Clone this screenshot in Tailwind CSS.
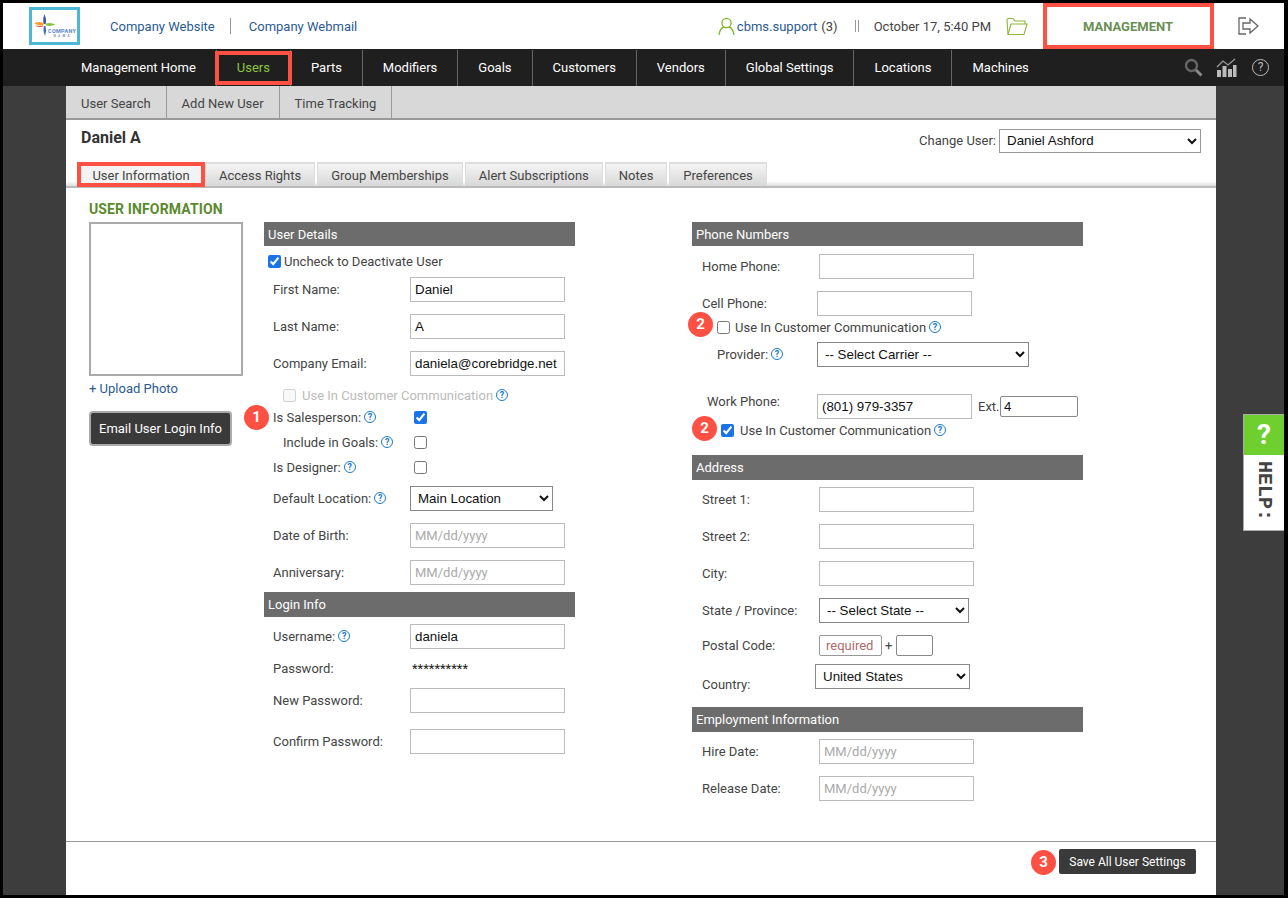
<!DOCTYPE html>
<html lang="en">
<head>
  <meta charset="UTF-8" />
  <title>User Information</title>
  <script src="https://cdn.jsdelivr.net/npm/@tailwindcss/browser@4"></script>
</head>
<body class="bg-black h-[898px] overflow-hidden font-['Roboto',sans-serif] text-[13px] text-[#444]">
<div class="relative pt-[3px] pl-[3px] pr-[4px] pb-[3px] h-[898px]">

  <!-- Header -->
  <header class="h-[46px] bg-white flex items-center">
    <svg class="ml-[26px] w-[51px] h-[38px] border-[3px] border-[#4db8d4]" viewBox="0 0 45 32">
      <path d="M12.300 4 Q15 10 13.500 14 L11.500 14 Q10.500 9 12.300 4 Z" fill="#3f4fb0"/>
      <path d="M23.500 14.500 Q18 17 13.500 15 L14 13.500 Q19 12 23.500 14.500 Z" fill="#86c440"/>
      <path d="M2 13.500 Q7 11 11.500 13 L11.500 15 Q6 16 2 13.500 Z" fill="#f2a02e"/>
      <path d="M3 15.500 Q7 16 11.500 15.500 L10 17 Q6 17.500 3 15.500 Z" fill="#e5523c"/>
      <path d="M13 26 Q10.500 20 12 16 L13.500 16 Q15 21 13 26 Z" fill="#3f6fc0"/>
      <text x="16" y="23" font-size="5.500" font-weight="700" fill="#5b86c4" textLength="28" font-family="Roboto">COMPANY</text>
      <text x="21.500" y="26.500" font-size="3.200" font-weight="700" fill="#7a8fb8" textLength="16" font-family="Roboto">NAME</text>
    </svg>
    <a class="ml-[30px] pt-[1px] text-[#2b5a93]">Company Website</a>
    <span class="ml-[15px] w-px h-[16px] bg-[#999]"></span>
    <a class="ml-[18px] pt-[1px] text-[#2b5a93]">Company Webmail</a>

    <svg class="ml-auto w-[17px] h-[19px]" viewBox="0 0 17 19" fill="none" stroke="#7fb52d" stroke-width="1.3">
      <circle cx="8.500" cy="6" r="4.600"/>
      <path d="M1 18 Q2 11 6 10 M16 18 Q15 11 11 10"/>
    </svg>
    <span class="ml-[2px] pt-[1px] text-[#2b5a93]">cbms.support</span>
    <span class="ml-[4px] pt-[1px]">(3)</span>
    <span class="ml-[17px] w-[4px] h-[12px] border-x border-[#999]"></span>
    <span class="ml-[15px] pt-[1px]">October 17, 5:40 PM</span>
    <svg class="ml-[15px] w-[22px] h-[19px]" viewBox="0 0 22 19" fill="none" stroke="#8db53a" stroke-width="1.1">
      <path d="M2 17.500 L1 3 Q1 1.500 2.500 1.500 L7 1.500 L9 4 L19 4 L19 7"/>
      <path d="M2 17.500 L18 17.500 L21 7 L5 7 Z"/>
    </svg>
    <div class="ml-[15px] w-[171px] h-[46px] border-[4px] border-[#ff5044] flex items-center justify-center pt-[1px] pr-[1px] text-[#6a8f55] font-bold">MANAGEMENT</div>
    <svg class="ml-[24px] mr-[25px] w-[21px] h-[18px]" viewBox="0 0 21 18" fill="none" stroke="#666" stroke-width="1.300">
      <path d="M8 1 L1 1 L1 17 L8 17"/>
      <path d="M5 6 L12 6 L12 2 L20 9 L12 16 L12 12 L5 12 Z"/>
    </svg>
  </header>

  <!-- Main nav -->
  <nav class="h-[37px] bg-[#1f1f1f] flex items-center pl-[58px] text-white">
    <a class="px-[20px] h-[36px] flex items-center border-r border-[#666]">Management Home</a>
    <a class="relative px-[20px] h-[36px] flex items-center border-r border-[#666] text-[#8cc63f]">Users
      <span class="absolute -left-[2px] -right-[2px] top-[1px] h-[34px] border-[4px] border-[#ff5044]"></span>
    </a>
    <a class="px-[20px] h-[36px] flex items-center border-r border-[#666]">Parts</a>
    <a class="px-[20px] h-[36px] flex items-center border-r border-[#666]">Modifiers</a>
    <a class="px-[20px] h-[36px] flex items-center border-r border-[#666]">Goals</a>
    <a class="px-[20px] h-[36px] flex items-center border-r border-[#666]">Customers</a>
    <a class="px-[20px] h-[36px] flex items-center border-r border-[#666]">Vendors</a>
    <a class="px-[20px] h-[36px] flex items-center border-r border-[#666]">Global Settings</a>
    <a class="px-[20px] h-[36px] flex items-center border-r border-[#666]">Locations</a>
    <a class="px-[20px] h-[36px] flex items-center">Machines</a>
    <svg class="ml-auto w-[19px] h-[19px]" viewBox="0 0 19 19" fill="none">
      <circle cx="7.500" cy="7.500" r="5.500" stroke="#666" stroke-width="2.400"/>
      <path d="M12 12 L17.500 17.500" stroke-width="3" stroke="#888"/>
    </svg>
    <svg class="ml-[13px] w-[21px] h-[19px]" viewBox="0 0 21 19">
      <path d="M1 9 L7 3 L12 7 L19 1" fill="none" stroke="#999" stroke-width="1.300"/>
      <path d="M1 12h4v7h-4zM6.500 8h4v11h-4zM12 11h4v8h-4zM17 7h3.500v12h-3.500z" fill="#bbb"/>
    </svg>
    <span class="ml-[15px] mr-[15px] w-[17px] h-[17px] rounded-full border border-[#bbb] text-[#bbb] text-[12px] leading-[15px] text-center">?</span>
  </nav>

  <div class="flex h-[809px] bg-[#3d3d3d]">
    <div class="w-[63px]"></div>
    <main class="w-[1150px] bg-white flex flex-col relative">

      <!-- Sub nav -->
      <div class="h-[34px] bg-[#d8d8d8] border-b-2 border-[#999] flex shrink-0">
        <a class="px-[15px] pt-[3px] flex items-center border-r border-[#999]">User Search</a>
        <a class="px-[15px] pt-[3px] flex items-center border-r border-[#999]">Add New User</a>
        <a class="px-[15px] pt-[3px] flex items-center border-r border-[#999]">Time Tracking</a>
      </div>

      <!-- Title row -->
      <div class="h-[42px] flex justify-between pl-[15px] pr-[15px] shrink-0">
        <h1 class="mt-[8px] text-[16px] leading-[20px] font-bold text-[#333]">Daniel A</h1>
        <div class="mt-[9px] flex items-center h-[24px]">
          <span class="mr-[3px]">Change User:</span>
          <select class="w-[202px] h-[24px] border border-[#999] pl-[3px] pb-[2px] text-[#111] font-['Liberation_Sans',sans-serif] text-[13.33px]"><option>Daniel Ashford</option></select>
        </div>
      </div>

      <!-- Tabs -->
      <div class="h-[26px] shrink-0 flex items-start pl-[11px] border-b-2 border-[#bbb] bg-gradient-to-b from-white from-80% to-[#ddd]">
        <a class="w-[128px] h-[25px] pt-[2px] border-[4px] border-[#ff5044] bg-[#f3f3f3] flex items-center justify-center">User Information</a>
        <a class="h-[24px] px-[13px] pt-[1px] flex items-center border-t-2 border-x border-[#ddd] bg-gradient-to-b from-[#f4f4f4] to-[#d8d8d8]">Access Rights</a>
        <a class="ml-[2px] h-[24px] px-[13px] pt-[1px] flex items-center border-t-2 border-x border-[#ddd] bg-gradient-to-b from-[#f4f4f4] to-[#d8d8d8]">Group Memberships</a>
        <a class="ml-[2px] h-[24px] px-[13px] pt-[1px] flex items-center border-t-2 border-x border-[#ddd] bg-gradient-to-b from-[#f4f4f4] to-[#d8d8d8]">Alert Subscriptions</a>
        <a class="ml-[2px] h-[24px] px-[13px] pt-[1px] flex items-center border-t-2 border-x border-[#ddd] bg-gradient-to-b from-[#f4f4f4] to-[#d8d8d8]">Notes</a>
        <a class="ml-[2px] h-[24px] px-[13px] pt-[1px] flex items-center border-t-2 border-x border-[#ddd] bg-gradient-to-b from-[#f4f4f4] to-[#d8d8d8]">Preferences</a>
      </div>

      <!-- Form -->
      <div class="flex-1 flex pl-[23px]">

        <!-- Photo column -->
        <div class="w-[154px] shrink-0 pt-[13px]">
          <h2 class="h-[17px] text-[14px] leading-[17px] tracking-[0.13px] font-bold text-[#5c8a2e] whitespace-nowrap">USER INFORMATION</h2>
          <div class="mt-[4px] w-[154px] h-[154px] border-2 border-[#aaa]"></div>
          <a class="block mt-[5px] h-[16px] leading-[16px] text-[#2b5a93]">+ Upload Photo</a>
          <button class="mt-[14px] w-[143px] h-[35px] rounded-[4px] bg-[#3a3a3a] border-2 border-[#aaa] text-white">Email User Login Info</button>
        </div>

        <!-- User details column -->
        <div class="w-[311px] ml-[21px] shrink-0 pt-[34px]">
          <div class="h-[24px] pt-[1px] bg-[#6c6c6c] text-white pl-[4px] flex items-center">User Details</div>

          <label class="mt-[6px] h-[20px] flex items-center pl-[4px]"><input type="checkbox" checked class="-translate-y-[1px] w-[13px] h-[13px] accent-[#1a73e8] mr-[3px]">Uncheck to Deactivate User</label>
          <div class="mt-[5px] h-[25px] flex items-center pl-[9px]"><span class="w-[137px]">First Name:</span><input value="Daniel" class="w-[155px] h-[25px] border border-[#bbb] px-[4px] text-[#111] font-['Liberation_Sans',sans-serif] text-[13.33px]"></div>
          <div class="mt-[12px] h-[25px] flex items-center pl-[9px]"><span class="w-[137px]">Last Name:</span><input value="A" class="w-[155px] h-[25px] border border-[#bbb] px-[4px] text-[#111] font-['Liberation_Sans',sans-serif] text-[13.33px]"></div>
          <div class="mt-[12px] h-[25px] flex items-center pl-[9px]"><span class="w-[137px]">Company Email:</span><input value="daniela@corebridge.net" class="w-[155px] h-[25px] border border-[#bbb] px-[4px] text-[#111] font-['Liberation_Sans',sans-serif] text-[13.33px]"></div>

          <div class="mt-[10px] h-[20px] flex items-center pl-[19px] text-[#bbb]"><input type="checkbox" disabled class="-translate-y-[1px] w-[13px] h-[13px] mr-[6px]">Use In Customer Communication<span class="-translate-y-[1px] ml-[3px] w-[12px] h-[12px] rounded-full border border-[#1a7ac8] text-[#1a7ac8] text-[9px] leading-[11px] text-center font-bold">?</span></div>
          <div class="mt-[2px] h-[20px] flex items-center pl-[9px]"><span class="w-[141px] flex items-center">Is Salesperson:<span class="-translate-y-[1px] ml-[3px] w-[12px] h-[12px] rounded-full border border-[#1a7ac8] text-[#1a7ac8] text-[9px] leading-[11px] text-center font-bold">?</span></span><input type="checkbox" checked class="-translate-y-[1px] w-[13px] h-[13px] accent-[#1a73e8]"></div>
          <div class="mt-[5px] h-[20px] flex items-center pl-[19px]"><span class="w-[131px] flex items-center">Include in Goals:<span class="-translate-y-[1px] ml-[3px] w-[12px] h-[12px] rounded-full border border-[#1a7ac8] text-[#1a7ac8] text-[9px] leading-[11px] text-center font-bold">?</span></span><input type="checkbox" class="-translate-y-[1px] w-[13px] h-[13px]"></div>
          <div class="mt-[5px] h-[20px] flex items-center pl-[9px]"><span class="w-[141px] flex items-center">Is Designer:<span class="-translate-y-[1px] ml-[3px] w-[12px] h-[12px] rounded-full border border-[#1a7ac8] text-[#1a7ac8] text-[9px] leading-[11px] text-center font-bold">?</span></span><input type="checkbox" class="-translate-y-[1px] w-[13px] h-[13px]"></div>

          <div class="mt-[8px] h-[25px] flex items-center pl-[9px]"><span class="w-[137px] flex items-center">Default Location:<span class="-translate-y-[1px] ml-[3px] w-[12px] h-[12px] rounded-full border border-[#1a7ac8] text-[#1a7ac8] text-[9px] leading-[11px] text-center font-bold">?</span></span><select class="w-[143px] h-[25px] border border-[#888] pl-[3px] text-[#111] font-['Liberation_Sans',sans-serif] text-[13.33px]"><option>Main Location</option></select></div>
          <div class="mt-[12px] h-[25px] flex items-center pl-[9px]"><span class="w-[137px]">Date of Birth:</span><input placeholder="MM/dd/yyyy" class="w-[155px] h-[25px] border border-[#bbb] px-[4px] placeholder:text-[#aaa]"></div>
          <div class="mt-[12px] h-[25px] flex items-center pl-[9px]"><span class="w-[137px]">Anniversary:</span><input placeholder="MM/dd/yyyy" class="w-[155px] h-[25px] border border-[#bbb] px-[4px] placeholder:text-[#aaa]"></div>

          <div class="mt-[7px] h-[25px] bg-[#6c6c6c] text-white pl-[4px] flex items-center">Login Info</div>
          <div class="mt-[7px] h-[25px] flex items-center pl-[9px]"><span class="w-[137px] flex items-center">Username:<span class="-translate-y-[1px] ml-[3px] w-[12px] h-[12px] rounded-full border border-[#1a7ac8] text-[#1a7ac8] text-[9px] leading-[11px] text-center font-bold">?</span></span><input value="daniela" class="w-[155px] h-[25px] border border-[#bbb] px-[4px] text-[#111] font-['Liberation_Sans',sans-serif] text-[13.33px]"></div>
          <div class="mt-[7px] h-[25px] flex items-center pl-[9px]"><span class="w-[139px]">Password:</span><span class="text-[#222]">**********</span></div>
          <div class="mt-[7px] h-[25px] flex items-center pl-[9px]"><span class="w-[137px]">New Password:</span><input class="w-[155px] h-[25px] border border-[#bbb]"></div>
          <div class="mt-[16px] h-[25px] flex items-center pl-[9px]"><span class="w-[137px]">Confirm Password:</span><input class="w-[155px] h-[25px] border border-[#bbb]"></div>
        </div>

        <!-- Phone / address column -->
        <div class="w-[391px] ml-[117px] shrink-0 pt-[34px]">
          <div class="h-[24px] pt-[1px] bg-[#6c6c6c] text-white pl-[4px] flex items-center">Phone Numbers</div>

          <div class="mt-[8px] h-[25px] flex items-center pl-[10px]"><span class="w-[117px]">Home Phone:</span><input class="w-[155px] h-[25px] border border-[#bbb]"></div>
          <div class="mt-[12px] h-[25px] flex items-center pl-[10px]"><span class="w-[115px]">Cell Phone:</span><input class="w-[155px] h-[25px] border border-[#bbb]"></div>
          <div class="mt-[2px] h-[20px] flex items-center pl-[25px]"><input type="checkbox" class="-translate-y-[1px] w-[13px] h-[13px] mr-[5px]">Use In Customer Communication<span class="-translate-y-[1px] ml-[3px] w-[12px] h-[12px] rounded-full border border-[#1a7ac8] text-[#1a7ac8] text-[9px] leading-[11px] text-center font-bold">?</span></div>
          <div class="mt-[4px] h-[25px] flex items-center pl-[25px]"><span class="w-[100px] flex items-center">Provider:<span class="-translate-y-[1px] ml-[3px] w-[12px] h-[12px] rounded-full border border-[#1a7ac8] text-[#1a7ac8] text-[9px] leading-[11px] text-center font-bold">?</span></span><select class="w-[212px] h-[25px] border border-[#888] pl-[3px] text-[#111] font-['Liberation_Sans',sans-serif] text-[13.33px]"><option>-- Select Carrier --</option></select></div>

          <div class="mt-[27px] h-[25px] flex items-center pl-[15px]"><span class="w-[110px] -mt-[10px]">Work Phone:</span><input value="(801) 979-3357" class="w-[155px] h-[25px] border border-[#bbb] px-[4px] text-[#111] font-['Liberation_Sans',sans-serif] text-[13.33px]"><span class="ml-[6px] w-[22px]">Ext.</span><input value="4" class="w-[78px] h-[21px] border border-[#888] rounded-[2px] px-[3px] text-[#111] font-['Liberation_Sans',sans-serif] text-[13.33px]"></div>
          <div class="mt-[2px] h-[20px] flex items-center pl-[29px]"><input type="checkbox" checked class="-translate-y-[1px] w-[13px] h-[13px] accent-[#1a73e8] mr-[6px]">Use In Customer Communication<span class="-translate-y-[1px] ml-[3px] w-[12px] h-[12px] rounded-full border border-[#1a7ac8] text-[#1a7ac8] text-[9px] leading-[11px] text-center font-bold">?</span></div>

          <div class="mt-[14px] h-[25px] bg-[#6c6c6c] text-white pl-[4px] flex items-center">Address</div>
          <div class="mt-[7px] h-[25px] flex items-center pl-[10px]"><span class="w-[117px]">Street 1:</span><input class="w-[155px] h-[25px] border border-[#bbb]"></div>
          <div class="mt-[12px] h-[25px] flex items-center pl-[10px]"><span class="w-[117px]">Street 2:</span><input class="w-[155px] h-[25px] border border-[#bbb]"></div>
          <div class="mt-[12px] h-[25px] flex items-center pl-[10px]"><span class="w-[117px]">City:</span><input class="w-[155px] h-[25px] border border-[#bbb]"></div>
          <div class="mt-[12px] h-[25px] flex items-center pl-[10px]"><span class="w-[117px]">State / Province:</span><select class="w-[150px] h-[25px] border border-[#888] pl-[3px] text-[#111] font-['Liberation_Sans',sans-serif] text-[13.33px]"><option>-- Select State --</option></select></div>
          <div class="mt-[12px] h-[21px] flex items-center pl-[10px]"><span class="w-[117px]">Postal Code:</span><input placeholder="required" class="w-[63px] h-[21px] border border-[#999] rounded-[2px] px-[6px] placeholder:text-[#b06a6a]"><span class="ml-[3px]">+</span><input class="ml-[4px] w-[37px] h-[21px] border border-[#888] rounded-[2px]"></div>
          <div class="mt-[8px] h-[25px] flex items-center pl-[10px]"><span class="w-[113px] mt-[17px]">Country:</span><select class="w-[155px] h-[25px] border border-[#888] pl-[3px] text-[#111] font-['Liberation_Sans',sans-serif] text-[13.33px]"><option>United States</option></select></div>

          <div class="mt-[18px] h-[25px] bg-[#6c6c6c] text-white pl-[4px] flex items-center">Employment Information</div>
          <div class="mt-[7px] h-[25px] flex items-center pl-[10px]"><span class="w-[117px]">Hire Date:</span><input placeholder="MM/dd/yyyy" class="w-[155px] h-[25px] border border-[#bbb] px-[4px] placeholder:text-[#aaa]"></div>
          <div class="mt-[12px] h-[25px] flex items-center pl-[10px]"><span class="w-[117px]">Release Date:</span><input placeholder="MM/dd/yyyy" class="w-[155px] h-[25px] border border-[#bbb] px-[4px] placeholder:text-[#aaa]"></div>
        </div>
      </div>

      <!-- Footer -->
      <div class="h-[54px] shrink-0 border-t border-[#999] flex justify-end items-start pt-[7px] pr-[20px]">
        <button class="w-[137px] h-[25px] rounded-[2px] bg-[#3a3a3a] text-white text-[12px]">Save All User Settings</button>
      </div>

      <!-- Numbered callouts -->
      <span class="absolute left-[178px] top-[319px] w-[25px] h-[25px] rounded-full bg-[#ff5044] text-white text-[15px] font-bold flex items-center justify-center">1</span>
      <span class="absolute left-[622px] top-[226px] w-[25px] h-[25px] rounded-full bg-[#ff5044] text-white text-[15px] font-bold flex items-center justify-center">2</span>
      <span class="absolute left-[626px] top-[330px] w-[25px] h-[25px] rounded-full bg-[#ff5044] text-white text-[15px] font-bold flex items-center justify-center">2</span>
      <span class="absolute left-[965px] top-[764px] w-[25px] h-[25px] rounded-full bg-[#ff5044] text-white text-[15px] font-bold flex items-center justify-center">3</span>
    </main>
    <div class="flex-1"></div>
  </div>

  <!-- Help tab -->
  <div class="absolute right-[4px] top-[414px] w-[41px] h-[117px] border-l border-y border-[#aaa] bg-white flex flex-col">
    <div class="h-[40px] bg-[#6fcf2e] text-white text-[28px] font-bold flex items-center justify-center">?</div>
    <div class="flex-1 flex justify-center pt-[6px]"><span class="[writing-mode:vertical-rl] font-['Liberation_Mono',monospace] font-bold text-[20px] leading-[20px] text-[#444]">HELP:</span></div>
  </div>
</div>
</body>
</html>
